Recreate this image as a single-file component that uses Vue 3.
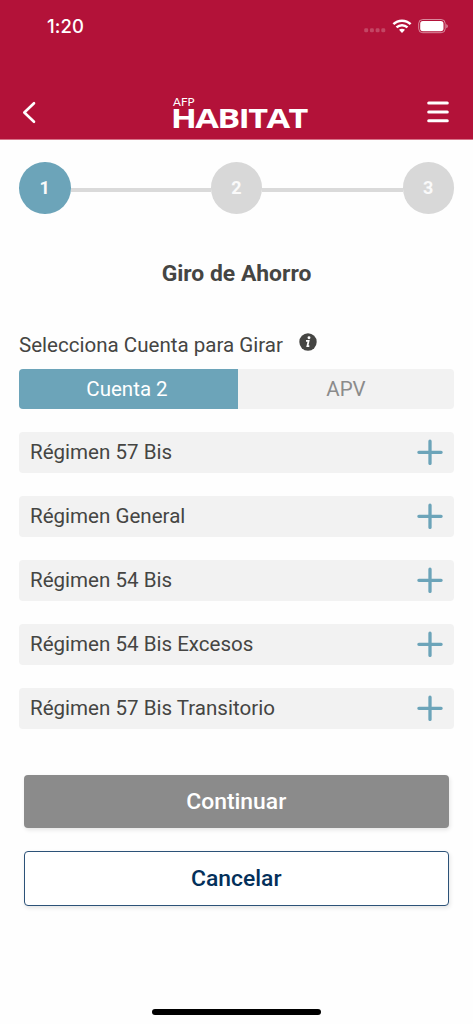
<script setup>
import { ref } from 'vue'

const accounts = ['Cuenta 2', 'APV']
const selected = ref(0)
const regimes = [
  'Régimen 57 Bis',
  'Régimen General',
  'Régimen 54 Bis',
  'Régimen 54 Bis Excesos',
  'Régimen 57 Bis Transitorio',
]
</script>

<template>
  <div class="screen">
    <header class="header">
      <div class="status">
        <span class="time">1:20</span>
        <div class="signals">
          <svg class="dots" width="22" height="6" viewBox="0 0 22 6">
            <rect v-for="n in 4" :key="n" :x="(n - 1) * 5.7 + 0.2" y="0.3" width="4" height="4" rx="1.4" />
          </svg>
          <svg class="wifi" width="20" height="15" viewBox="0 0 20 15" fill="none" stroke="#fff" stroke-width="2.5">
            <path d="M1.4 5.2C6.2.5 13.8.5 18.6 5.2" />
            <path d="M4.5 8.4c3.2-2.9 7.8-2.9 11 0" />
            <path d="M7 10.8c1.7-1.5 4.3-1.5 6 0L10 13.9z" fill="#fff" stroke="none" />
          </svg>
          <svg class="battery" width="31" height="15" viewBox="0 0 31 15">
            <rect x=".7" y=".5" width="26.5" height="13.2" rx="4" fill="none" stroke="#fff" stroke-opacity=".5" stroke-width="1" />
            <rect x="2.2" y="2" width="23.3" height="10.2" rx="2.7" fill="#fff" />
            <path d="M28.3 4.9c2 .9 2 3.5 0 4.4z" fill="#fff" fill-opacity=".55" />
          </svg>
        </div>
      </div>
      <nav class="nav">
        <svg class="back" width="14" height="23" viewBox="0 0 14 23">
          <path d="M12 2.2 2.3 11.5 12 20.8" fill="none" stroke="#fff" stroke-width="2.6" stroke-linecap="round" stroke-linejoin="round" />
        </svg>
        <svg class="logo" width="140" height="46" viewBox="0 0 140 46" fill="#fff">
          <text class="logo-small" x="3" y="17.8" textLength="21.5" lengthAdjust="spacingAndGlyphs">AFP</text>
          <text class="logo-main" x="0.7" y="39.6" textLength="136" lengthAdjust="spacingAndGlyphs">HABITAT</text>
        </svg>
        <svg class="menu" width="22" height="22" viewBox="0 0 22 22">
          <path d="M1.7 2.1h18.6M1.7 11h18.6M1.7 19.8h18.6" fill="none" stroke="#fff" stroke-width="3" stroke-linecap="round" />
        </svg>
      </nav>
    </header>

    <main class="content">
      <div class="steps">
        <div class="step active">1</div>
        <div class="line"></div>
        <div class="step">2</div>
        <div class="line"></div>
        <div class="step">3</div>
      </div>
      <h1 class="title">Giro de Ahorro</h1>
      <div class="prompt">
        <span>Selecciona Cuenta para Girar</span>
        <svg class="info" width="18" height="18" viewBox="0 0 18 18">
          <circle cx="9" cy="9" r="8.7" fill="#454543" />
          <circle cx="10" cy="4.8" r="1.45" fill="#fff" />
          <path d="M7 7.9h2.6l-1.2 5.2h1.9" fill="none" stroke="#fff" stroke-width="1.8" />
        </svg>
      </div>
      <div class="tabs">
        <button
          v-for="(account, i) in accounts"
          :key="account"
          class="tab"
          :class="{ on: selected === i }"
          @click="selected = i"
        >{{ account }}</button>
      </div>
      <ul class="regimes">
        <li v-for="regime in regimes" :key="regime" class="regime">
          <span>{{ regime }}</span>
          <svg width="26" height="26" viewBox="0 0 26 26">
            <path d="M1.9 13.3h22.2M13 2.2v22.2" stroke="#6ca4b9" stroke-width="3.3" stroke-linecap="round" />
          </svg>
        </li>
      </ul>
      <div class="actions">
        <button class="action primary">Continuar</button>
        <button class="action secondary">Cancelar</button>
      </div>
    </main>
    <div class="home"></div>
  </div>
</template>

<style>
body {
  background: #fff;
}
</style>

<style scoped>
.screen {
  display: flex;
  flex-direction: column;
  width: 473px;
  height: 1024px;
  overflow: hidden;
  background: #fefefe;
  color: #454543;
  font-family: Roboto, "Liberation Sans", sans-serif;
}
* {
  box-sizing: border-box;
}
button {
  margin: 0;
  padding: 0;
  border: 0;
  font-family: inherit;
}
svg {
  display: block;
  flex: none;
}
.header {
  flex: none;
  height: 140px;
  background: #b31239;
  border-bottom: 1px solid #d77489;
}
.status {
  display: flex;
  justify-content: space-between;
  align-items: center;
  height: 52px;
  padding: 0 24px 0 47px;
}
.time {
  color: #fff;
  font: 500 18.5px/22px Inter, sans-serif;
  letter-spacing: 0.1px;
}
.signals {
  display: flex;
  align-items: center;
}
.dots {
  margin: 9px 6px 0 0;
  fill: #fff;
  fill-opacity: 0.22;
}
.wifi {
  margin-right: 6px;
}
.nav {
  display: flex;
  align-items: center;
  justify-content: space-between;
  height: 36px;
  margin-top: 43px;
  padding: 0 24px 0 22px;
}
.back,
.menu {
  margin-top: -2px;
}
.logo {
  margin: -4px 0 0 17px;
  overflow: visible;
}
.logo-small {
  font: 400 10.5px Lato, sans-serif;
}
.logo-main {
  font: 700 27px "Open Sans", sans-serif;
  letter-spacing: -1.3px;
}
.content {
  flex: 1;
  padding: 22px 19px 0;
}
.steps {
  display: flex;
  align-items: center;
  height: 52px;
}
.step {
  flex: none;
  width: 51.5px;
  height: 51.5px;
  border-radius: 50%;
  background: #d8d8d8;
  color: #fafafa;
  font-size: 18px;
  font-weight: 700;
  line-height: 52px;
  text-align: center;
}
.step.active {
  background: #6ca4b9;
}
.line {
  flex: 1;
  height: 4px;
  margin-top: 3px;
  background: #dadada;
}
.title {
  margin: 45px 0 0;
  font-size: 22.9px;
  font-weight: 700;
  line-height: 30px;
  text-align: center;
}
.prompt {
  display: flex;
  align-items: center;
  height: 30px;
  margin-top: 41px;
  font-size: 20.55px;
}
.info {
  margin: -7px 0 0 16px;
}
.tabs {
  display: flex;
  height: 40px;
  margin-top: 9px;
  border-radius: 4px;
  overflow: hidden;
}
.tab {
  flex: 0 0 216px;
  background: #f2f2f2;
  color: #8b8b8b;
  font-size: 20.5px;
}
.tab.on {
  flex-basis: 219px;
  padding-right: 3px;
  background: #6ca4b9;
  color: #fff;
}
.regimes {
  display: flex;
  flex-direction: column;
  gap: 23px;
  margin: 23px 0 0;
  padding: 0;
  list-style: none;
}
.regime {
  display: flex;
  align-items: center;
  justify-content: space-between;
  height: 41px;
  padding: 0 11px 1px;
  border-radius: 4px;
  background: #f2f2f2;
  font-size: 20.55px;
}
.actions {
  display: flex;
  flex-direction: column;
  gap: 23px;
  margin: 45.5px 5px 0 4.5px;
}
.action {
  height: 53.5px;
  border-radius: 4px;
  font-size: 22.9px;
  font-weight: 500;
  box-shadow: 1px 2px 4px rgba(0, 0, 0, 0.1);
}
.primary {
  background: #8b8b8b;
  color: #fff;
}
.secondary {
  height: 55px;
  border: 1px solid #2c5278;
  background: #fff;
  color: #04305a;
}
.home {
  flex: none;
  width: 169px;
  height: 6px;
  margin: 0 auto 9px;
  border-radius: 3px;
  background: #000;
}
</style>
